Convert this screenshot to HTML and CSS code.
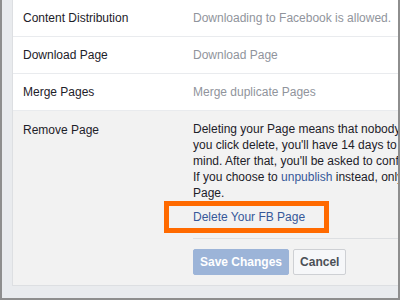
FILE: index.html
```html
<!DOCTYPE html>
<html>
    <head>
        <meta charset="utf-8" />
        <title>Page Settings</title>
        <link rel="stylesheet" href="styles.css">
    </head>

    <body>
        <div class="frame">
            <div class="panel">
                <div class="row">
                    <div class="label">Content Distribution</div>
                    <div class="value">Downloading to Facebook is allowed.</div>
                </div>
                <div class="row">
                    <div class="label">Download Page</div>
                    <div class="value">Download Page</div>
                </div>
                <div class="row">
                    <div class="label">Merge Pages</div>
                    <div class="value">Merge duplicate Pages</div>
                </div>
                <div class="remove">
                    <div class="remove-label">Remove Page</div>
                    <div class="remove-body">
                        <p class="text">
                            Deleting your Page means that nobody will be able to see or find it. Once<br>
                            you click delete, you'll have 14 days to restore it in case you change your<br>
                            mind. After that, you'll be asked to confirm whether to delete it permanently.<br>
                            If you choose to <a class="link" href="#">unpublish</a> instead, only admins will be able to see your<br>
                            Page.
                        </p>
                        <div class="delete">
                            <a class="link" href="#">Delete Your FB Page</a>
                            <span class="highlight"></span>
                        </div>
                        <div class="actions">
                            <button class="btn btn-save">Save Changes</button>
                            <button class="btn btn-cancel">Cancel</button>
                        </div>
                    </div>
                </div>
            </div>
        </div>
    </body>
</html>
```

FILE: styles.css
```css
html,
body {
    margin: 0;
    padding: 0;
}
body {
    font-family: "Liberation Sans", Arial, sans-serif;
    font-size: 12px;
    color: #1d2129;
}
.frame {
    width: 400px;
    height: 300px;
    box-sizing: border-box;
    border: 2px solid #8e8e8e;
    border-top: 0;
    background: #e9ebee;
    padding: 0 0 12px 10px;
    overflow: hidden;
}
.panel {
    height: 100%;
    box-sizing: border-box;
    background: #ffffff;
    border-left: 1px solid #dddfe2;
    border-bottom: 1px solid #dddfe2;
    overflow: hidden;
}
.row {
    display: grid;
    grid-template-columns: 170px 1fr;
    padding: 11px 0 11px 10px;
    line-height: 14px;
    border-bottom: 1px solid #e9ebee;
    white-space: nowrap;
}
.value {
    color: #90949c;
}
.remove {
    display: grid;
    grid-template-columns: 170px 1fr;
    padding: 10px 0 0 10px;
    background: #f2f2f2;
    line-height: 16px;
    height: 100%;
}
.remove-label {
    padding-top: 1px;
}
.text {
    margin: 0;
    white-space: nowrap;
}
.link {
    color: #365899;
    text-decoration: none;
}
.delete {
    position: relative;
    padding: 8px 0 13px;
    border-bottom: 1px solid #dddfe2;
}
.highlight {
    position: absolute;
    left: -29px;
    top: 0;
    width: 155px;
    height: 22px;
    border: 5px solid #ff6a00;
}
.actions {
    display: flex;
    gap: 4px;
    padding-top: 10px;
}
.btn {
    height: 26px;
    padding: 0 6px;
    font-family: inherit;
    font-size: 12px;
    font-weight: bold;
    border-radius: 2px;
    border: 1px solid;
}
.btn-save {
    background: #9cb4d8;
    border-color: #9cb4d8;
    color: #ffffff;
}
.btn-cancel {
    background: #f6f7f9;
    border-color: #ced0d4;
    color: #4b4f56;
}
```
